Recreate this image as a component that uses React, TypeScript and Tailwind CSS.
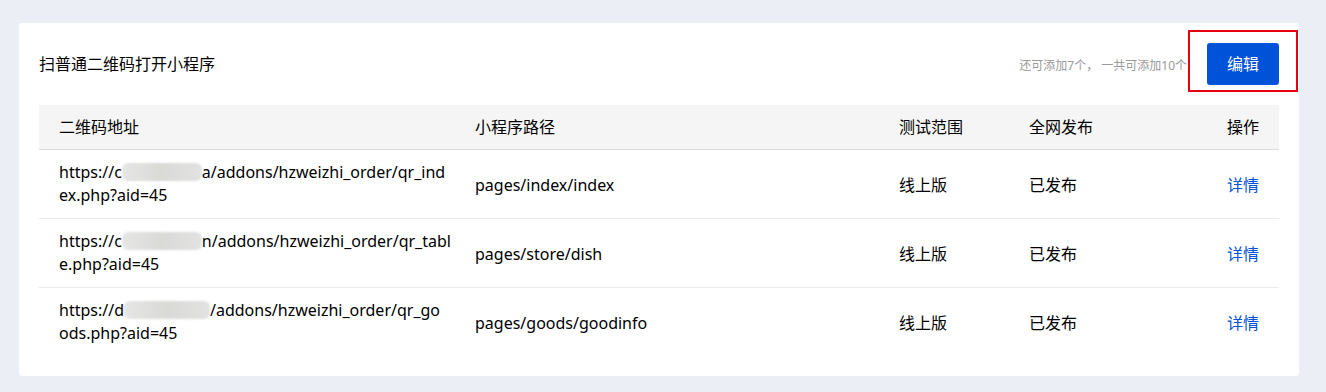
import React from 'react';

interface Row {
  head: string;
  tail: string;
  second: string;
  blurWidth: number;
  path: string;
}

const rows: Row[] = [
  { head: 'https://c', tail: 'a/addons/hzweizhi_order/qr_ind', second: 'ex.php?aid=45', blurWidth: 80, path: 'pages/index/index' },
  { head: 'https://c', tail: 'n/addons/hzweizhi_order/qr_tabl', second: 'e.php?aid=45', blurWidth: 80, path: 'pages/store/dish' },
  { head: 'https://d', tail: '/addons/hzweizhi_order/qr_go', second: 'ods.php?aid=45', blurWidth: 86, path: 'pages/goods/goodinfo' },
];

const Blur: React.FC<{ width: number }> = ({ width }) => (
  <span
    className="inline-block h-[18px] align-[-3px] rounded-[6px] bg-gradient-to-r from-[#e6e6e6] via-[#d9d9d6] to-[#e2e2e2] blur-[1px]"
    style={{ width }}
  />
);

const App: React.FC = () => {
  return (
    <div
      className="min-h-[392px] bg-[#ebeef5] pt-[23px] pl-[19px] pr-[27px] pb-[15px] text-black"
      style={{ fontFamily: '"Noto Sans", "Noto Sans CJK SC", sans-serif' }}
    >
      <div className="bg-white rounded-[3px] px-5 pb-5">
        <div className="flex items-center justify-between pt-5 pb-5">
          <h1 className="text-[16px] leading-[22px] font-normal">扫普通二维码打开小程序</h1>
          <div className="flex items-center gap-[20px]">
            <span className="text-[12px] text-[#999] mt-[3px]">还可添加7个， 一共可添加10个</span>
            <div className="relative">
              <button className="w-[72px] h-[42px] rounded-[3px] bg-[#0052d9] text-white text-[16px]">
                编辑
              </button>
              <div className="absolute -left-[19px] -top-[13px] w-[110px] h-[62px] border-2 border-[#e60012] pointer-events-none" />
            </div>
          </div>
        </div>

        <table className="w-full table-fixed border-collapse text-[16px]">
          <colgroup>
            <col className="w-[416px]" />
            <col className="w-[424px]" />
            <col className="w-[130px]" />
            <col />
            <col className="w-[100px]" />
          </colgroup>
          <thead>
            <tr className="bg-[#f5f5f5] border-b border-[#dcdcdc]">
              <th className="h-[44px] pl-5 text-left font-normal">二维码地址</th>
              <th className="pl-5 text-left font-normal">小程序路径</th>
              <th className="pl-5 text-left font-normal">测试范围</th>
              <th className="pl-5 text-left font-normal">全网发布</th>
              <th className="pr-5 text-right font-normal">操作</th>
            </tr>
          </thead>
          <tbody>
            {rows.map((row, i) => (
              <tr key={i} className={i < rows.length - 1 ? 'border-b border-[#ebebeb]' : ''}>
                <td className="pl-5 py-[11px] leading-[23px] whitespace-nowrap">
                  {row.head}
                  <Blur width={row.blurWidth} />
                  {row.tail}
                  <br />
                  {row.second}
                </td>
                <td className="pl-5 pt-[2px]">{row.path}</td>
                <td className="pl-5 pt-[2px]">线上版</td>
                <td className="pl-5 pt-[2px]">已发布</td>
                <td className="pr-5 pt-[2px] text-right">
                  <a className="text-[#0052d9] cursor-pointer">详情</a>
                </td>
              </tr>
            ))}
          </tbody>
        </table>
      </div>
    </div>
  );
};

export default App;
